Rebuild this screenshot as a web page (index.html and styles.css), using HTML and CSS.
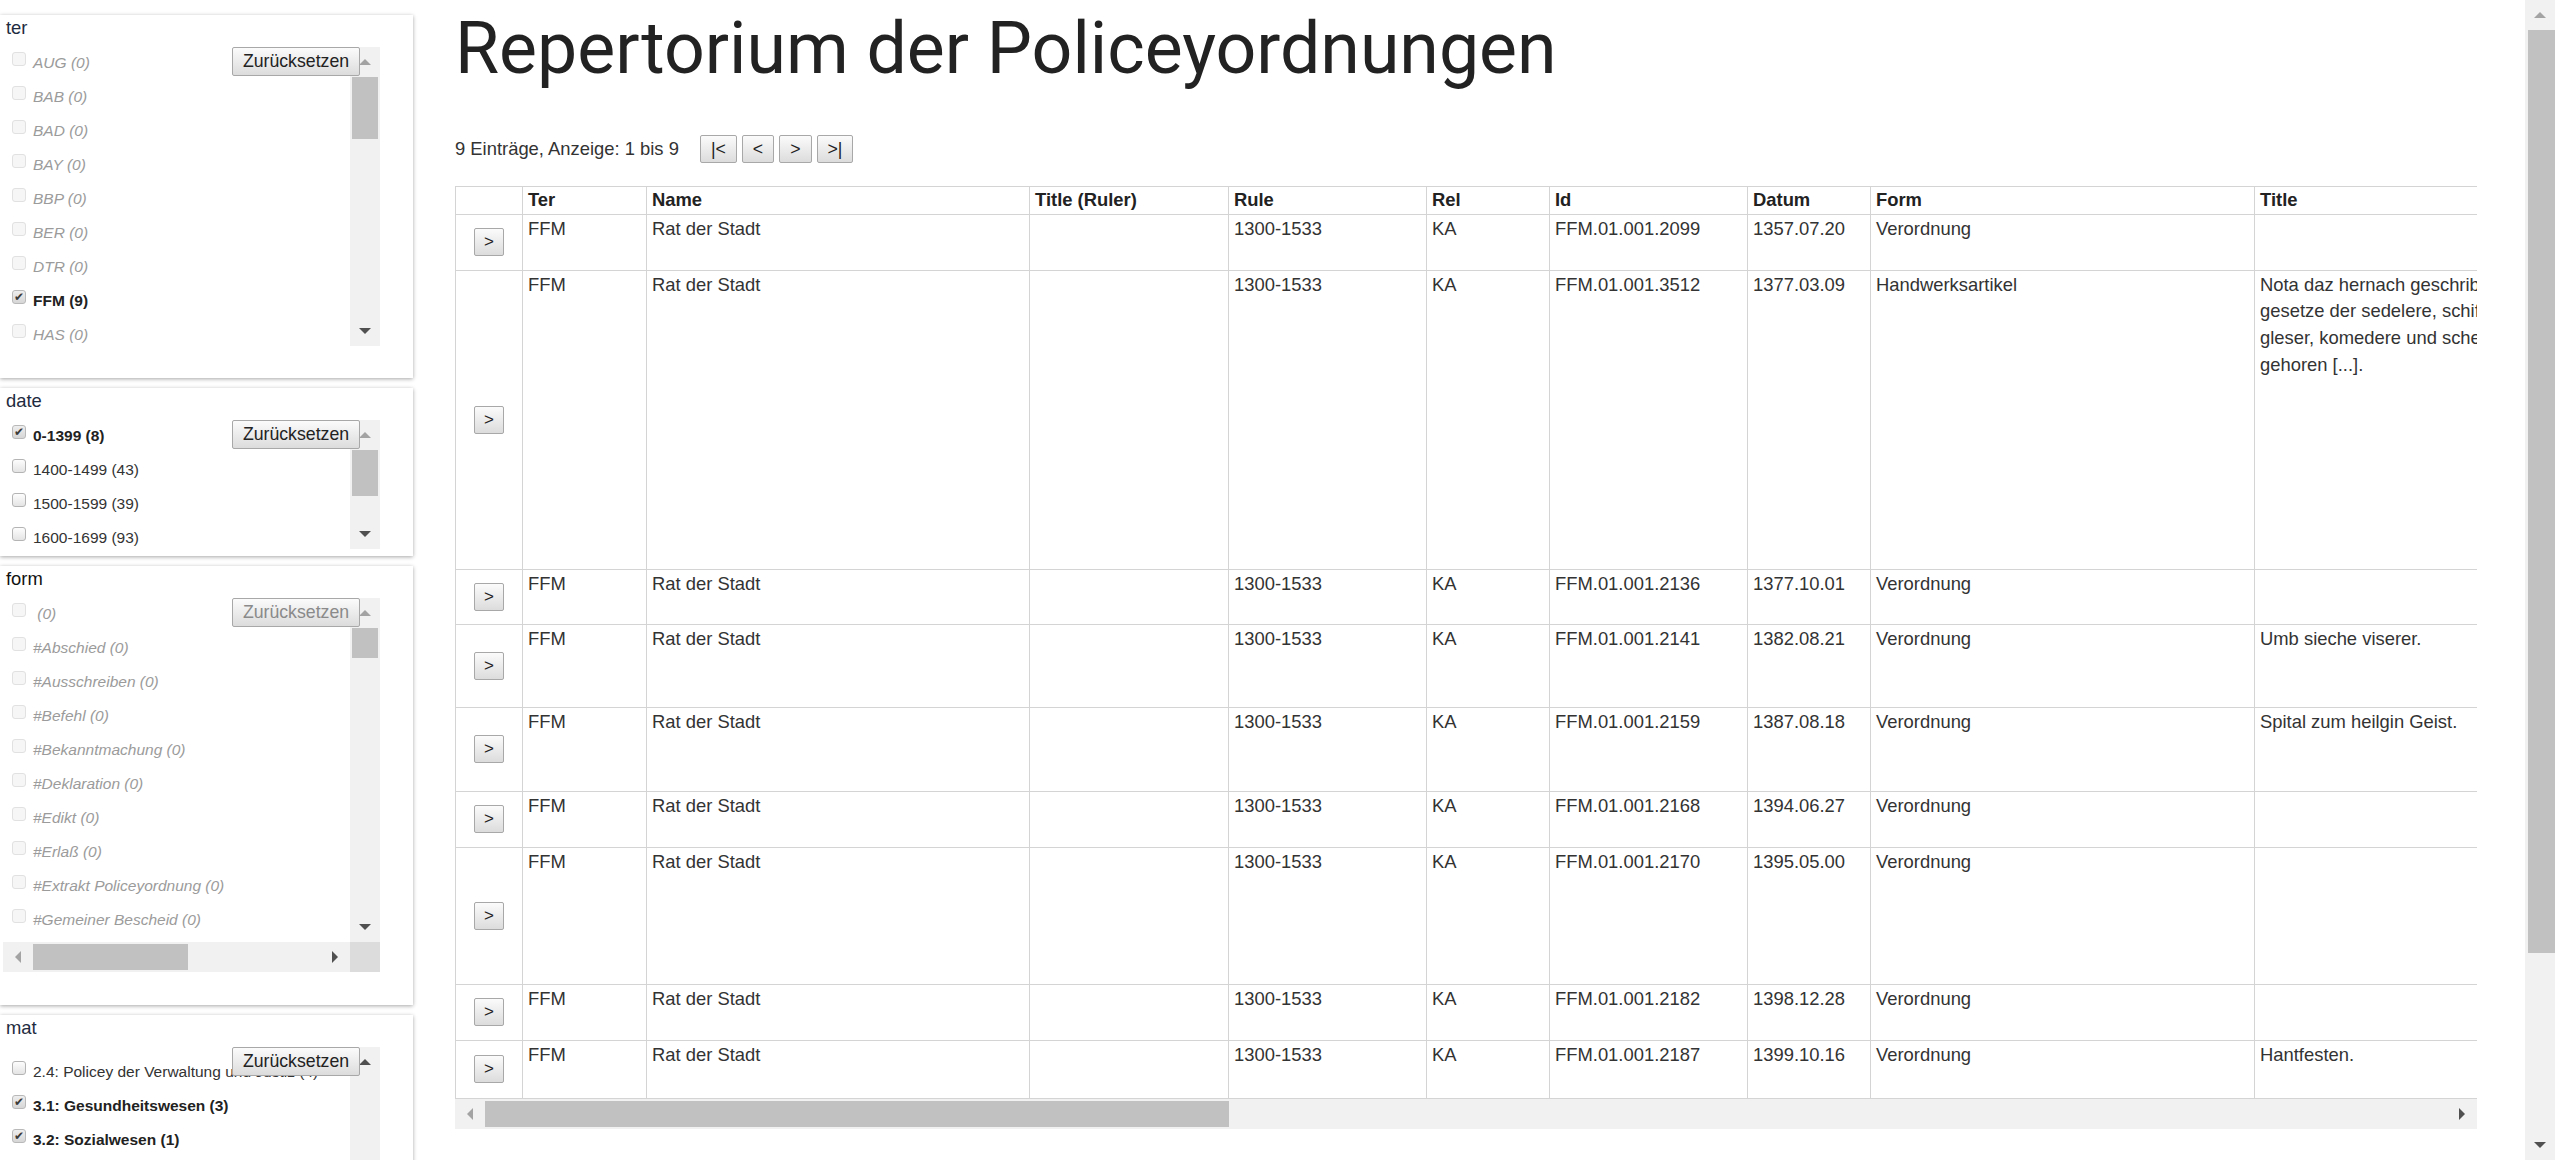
FILE: index.html
```html
<!DOCTYPE html>
<html lang="de">
<head>
<meta charset="utf-8">
<title>Repertorium der Policeyordnungen</title>
<link rel="stylesheet" href="styles.css">
</head>
<body>
<div class="page">
  <aside class="sidebar">
    <section class="panel p-ter">
      <div class="label">ter</div>
      <div class="listbox">
        <div class="lb-row h-ter">
          <div class="items">
            <div class="item dis"><span class="cb"></span><span class="txt">AUG (0)</span></div>
            <div class="item dis"><span class="cb"></span><span class="txt">BAB (0)</span></div>
            <div class="item dis"><span class="cb"></span><span class="txt">BAD (0)</span></div>
            <div class="item dis"><span class="cb"></span><span class="txt">BAY (0)</span></div>
            <div class="item dis"><span class="cb"></span><span class="txt">BBP (0)</span></div>
            <div class="item dis"><span class="cb"></span><span class="txt">BER (0)</span></div>
            <div class="item dis"><span class="cb"></span><span class="txt">DTR (0)</span></div>
            <div class="item sel"><span class="cb on">✔</span><span class="txt">FFM (9)</span></div>
            <div class="item dis"><span class="cb"></span><span class="txt">HAS (0)</span></div>
          </div>
          <div class="vscroll">
            <div class="arr up off"></div>
            <div class="vthumb t-ter"></div>
            <div class="vfill"></div>
            <div class="arr down"></div>
          </div>
        </div>
        <button class="reset">Zurücksetzen</button>
      </div>
    </section>

    <section class="panel p-date">
      <div class="label">date</div>
      <div class="listbox">
        <div class="lb-row h-date">
          <div class="items">
            <div class="item sel"><span class="cb en on">✔</span><span class="txt">0-1399 (8)</span></div>
            <div class="item"><span class="cb en"></span><span class="txt">1400-1499 (43)</span></div>
            <div class="item"><span class="cb en"></span><span class="txt">1500-1599 (39)</span></div>
            <div class="item"><span class="cb en"></span><span class="txt">1600-1699 (93)</span></div>
          </div>
          <div class="vscroll">
            <div class="arr up off"></div>
            <div class="vthumb t-date"></div>
            <div class="vfill"></div>
            <div class="arr down"></div>
          </div>
        </div>
        <button class="reset">Zurücksetzen</button>
      </div>
    </section>

    <section class="panel p-form">
      <div class="label dark">form</div>
      <div class="listbox">
        <div class="lb-row h-form">
          <div class="items">
            <div class="item dis"><span class="cb"></span><span class="txt">&nbsp;(0)</span></div>
            <div class="item dis"><span class="cb"></span><span class="txt">#Abschied (0)</span></div>
            <div class="item dis"><span class="cb"></span><span class="txt">#Ausschreiben (0)</span></div>
            <div class="item dis"><span class="cb"></span><span class="txt">#Befehl (0)</span></div>
            <div class="item dis"><span class="cb"></span><span class="txt">#Bekanntmachung (0)</span></div>
            <div class="item dis"><span class="cb"></span><span class="txt">#Deklaration (0)</span></div>
            <div class="item dis"><span class="cb"></span><span class="txt">#Edikt (0)</span></div>
            <div class="item dis"><span class="cb"></span><span class="txt">#Erlaß (0)</span></div>
            <div class="item dis"><span class="cb"></span><span class="txt">#Extrakt Policeyordnung (0)</span></div>
            <div class="item dis"><span class="cb"></span><span class="txt">#Gemeiner Bescheid (0)</span></div>
            <div class="item dis"><span class="cb"></span><span class="txt">#Generale (0)</span></div>
          </div>
          <div class="vscroll">
            <div class="arr up off"></div>
            <div class="vthumb t-form"></div>
            <div class="vfill"></div>
            <div class="arr down"></div>
          </div>
        </div>
        <div class="hrow">
          <div class="hbar">
            <div class="arr left off"></div>
            <div class="hthumb t-hform"></div>
            <div class="hfill"></div>
            <div class="arr right"></div>
          </div>
          <div class="corner"></div>
        </div>
        <button class="reset" disabled>Zurücksetzen</button>
      </div>
    </section>

    <section class="panel p-mat">
      <div class="label">mat</div>
      <div class="listbox">
        <div class="lb-row h-mat">
          <div class="items pad-mat">
            <div class="item"><span class="cb en"></span><span class="txt">2.4: Policey der Verwaltung und Justiz (4)</span></div>
            <div class="item sel"><span class="cb en on">✔</span><span class="txt">3.1: Gesundheitswesen (3)</span></div>
            <div class="item sel"><span class="cb en on">✔</span><span class="txt">3.2: Sozialwesen (1)</span></div>
            <div class="item"><span class="cb en"></span><span class="txt">3.3: Bildungswesen (2)</span></div>
          </div>
          <div class="vscroll">
            <div class="arr up"></div>
            <div class="vfill"></div>
          </div>
        </div>
        <button class="reset">Zurücksetzen</button>
      </div>
    </section>
  </aside>

  <main class="main">
    <h1 class="title">Repertorium der Policeyordnungen</h1>

    <div class="pager">
      <span class="count">9 Einträge, Anzeige: 1 bis 9</span>
      <button class="pbtn">|&lt;</button>
      <button class="pbtn">&lt;</button>
      <button class="pbtn">&gt;</button>
      <button class="pbtn">&gt;|</button>
    </div>

    <div class="table-wrap">
      <div class="table-clip">
        <table class="grid">
          <colgroup>
            <col class="c-act"><col class="c-ter"><col class="c-name"><col class="c-ruler"><col class="c-rule">
            <col class="c-rel"><col class="c-id"><col class="c-datum"><col class="c-form"><col class="c-title">
          </colgroup>
          <thead>
            <tr class="hr">
              <th></th><th>Ter</th><th>Name</th><th>Title (Ruler)</th><th>Rule</th>
              <th>Rel</th><th>Id</th><th>Datum</th><th>Form</th><th>Title</th>
            </tr>
          </thead>
          <tbody>
            <tr class="r56">
              <td class="act"><button class="rowbtn">&gt;</button></td>
              <td>FFM</td><td>Rat der Stadt</td><td></td><td>1300-1533</td>
              <td>KA</td><td>FFM.01.001.2099</td><td>1357.07.20</td><td>Verordnung</td><td></td>
            </tr>
            <tr class="r299">
              <td class="act"><button class="rowbtn">&gt;</button></td>
              <td>FFM</td><td>Rat der Stadt</td><td></td><td>1300-1533</td>
              <td>KA</td><td>FFM.01.001.3512</td><td>1377.03.09</td><td>Handwerksartikel</td>
              <td class="nw">Nota daz hernach geschriben stent die<br>gesetze der sedelere, schiffere und<br>gleser, komedere und schefere, die dar zu<br>gehoren [...].</td>
            </tr>
            <tr class="r55">
              <td class="act"><button class="rowbtn">&gt;</button></td>
              <td>FFM</td><td>Rat der Stadt</td><td></td><td>1300-1533</td>
              <td>KA</td><td>FFM.01.001.2136</td><td>1377.10.01</td><td>Verordnung</td><td></td>
            </tr>
            <tr class="r83">
              <td class="act"><button class="rowbtn">&gt;</button></td>
              <td>FFM</td><td>Rat der Stadt</td><td></td><td>1300-1533</td>
              <td>KA</td><td>FFM.01.001.2141</td><td>1382.08.21</td><td>Verordnung</td><td>Umb sieche viserer.</td>
            </tr>
            <tr class="r84">
              <td class="act"><button class="rowbtn">&gt;</button></td>
              <td>FFM</td><td>Rat der Stadt</td><td></td><td>1300-1533</td>
              <td>KA</td><td>FFM.01.001.2159</td><td>1387.08.18</td><td>Verordnung</td><td>Spital zum heilgin Geist.</td>
            </tr>
            <tr class="r56">
              <td class="act"><button class="rowbtn">&gt;</button></td>
              <td>FFM</td><td>Rat der Stadt</td><td></td><td>1300-1533</td>
              <td>KA</td><td>FFM.01.001.2168</td><td>1394.06.27</td><td>Verordnung</td><td></td>
            </tr>
            <tr class="r137">
              <td class="act"><button class="rowbtn">&gt;</button></td>
              <td>FFM</td><td>Rat der Stadt</td><td></td><td>1300-1533</td>
              <td>KA</td><td>FFM.01.001.2170</td><td>1395.05.00</td><td>Verordnung</td><td></td>
            </tr>
            <tr class="r56">
              <td class="act"><button class="rowbtn">&gt;</button></td>
              <td>FFM</td><td>Rat der Stadt</td><td></td><td>1300-1533</td>
              <td>KA</td><td>FFM.01.001.2182</td><td>1398.12.28</td><td>Verordnung</td><td></td>
            </tr>
            <tr class="r58">
              <td class="act"><button class="rowbtn">&gt;</button></td>
              <td>FFM</td><td>Rat der Stadt</td><td></td><td>1300-1533</td>
              <td>KA</td><td>FFM.01.001.2187</td><td>1399.10.16</td><td>Verordnung</td><td>Hantfesten.</td>
            </tr>
          </tbody>
        </table>
      </div>
      <div class="hbar tbar">
        <div class="arr left off"></div>
        <div class="hthumb t-htable"></div>
        <div class="hfill"></div>
        <div class="arr right"></div>
      </div>
    </div>
  </main>
</div>

<div class="page-scroll">
  <div class="arr up off"></div>
  <div class="vthumb t-page"></div>
  <div class="vfill"></div>
  <div class="arr down"></div>
</div>
</body>
</html>
```
FILE: styles.css
```css
html, body {
  margin: 0;
  height: 1160px;
  overflow: hidden;
}
body {
  font-family: "Liberation Sans", Arial, sans-serif;
  color: #333;
  background: #fff;
}
.page {
  display: flex;
  align-items: flex-start;
}

/* ---------- sidebar ---------- */
.sidebar {
  width: 413px;
  flex: none;
  padding-top: 15px;
  display: flex;
  flex-direction: column;
  gap: 10px;
}
.panel {
  background: #fff;
  box-shadow: 0 1px 4px rgba(0, 0, 0, 0.35);
  overflow: hidden;
}
.p-ter { height: 363px; }
.p-date { height: 168px; }
.p-form { height: 439px; }
.p-mat { height: 220px; }

.label {
  font-size: 18.4px;
  line-height: 26.7px;
  padding-left: 6px;
  color: #1e2b40;
}
.label.dark { color: #111; }

.listbox {
  position: relative;
  margin: 5px 0 0 3px;
  width: 377px;
  display: flex;
  flex-direction: column;
}
.lb-row { display: flex; }
.h-ter { height: 299px; }
.h-date { height: 129px; }
.h-form { height: 344px; }
.h-mat { height: 180px; }

.items {
  flex: 1;
  overflow: hidden;
  padding-top: 5.5px;
}
.items.pad-mat { padding-top: 14px; }
.item {
  height: 34px;
  display: flex;
  align-items: flex-start;
  padding-left: 9px;
  font-size: 15.5px;
  line-height: 20px;
  white-space: nowrap;
  color: #333;
}
.item .txt { margin-top: 1px; margin-left: 7px; }
.item.dis { color: #9b9b9b; font-style: italic; }
.item.sel { font-weight: bold; color: #222; }

.cb {
  box-sizing: border-box;
  width: 14px;
  height: 14px;
  flex: none;
  border: 1px solid #e1e1e1;
  border-radius: 3px;
  background: #f6f6f6;
  font-family: "DejaVu Sans", sans-serif;
  font-size: 12px;
  line-height: 12px;
  text-align: center;
  color: #3a3a3a;
  font-style: normal;
  font-weight: normal;
}
.cb.en {
  border-color: #b4b4b4;
  background: linear-gradient(#fdfdfd, #e4e4e4);
}
.cb.on {
  border-color: #b9b9b9;
  background: linear-gradient(#eeeeee, #d6d6d6);
}

.vscroll {
  width: 30px;
  flex: none;
  background: #f1f1f1;
  display: flex;
  flex-direction: column;
}
.vthumb {
  margin: 0 2px;
  background: #c1c1c1;
  flex: none;
}
.vfill { flex: 1; }
.t-ter { height: 62px; }
.t-date { height: 46px; }
.t-form { height: 30px; }

.hrow { display: flex; height: 30px; }
.hbar {
  flex: 1;
  background: #f1f1f1;
  display: flex;
}
.corner { width: 30px; background: #dcdcdc; }
.hthumb {
  margin: 2px 0 2px 0;
  background: #c1c1c1;
  flex: none;
}
.hfill { flex: 1; }
.t-hform { width: 155px; }

/* arrow buttons of scrollbars */
.arr {
  --c: #505050;
  width: 30px;
  height: 30px;
  flex: none;
  display: flex;
  align-items: center;
  justify-content: center;
}
.arr.off { --c: #a3a3a3; }
.arr::before {
  content: "";
  border-style: solid;
  width: 0;
  height: 0;
}
.arr.up::before { border-width: 0 6px 6px 6px; border-color: transparent transparent var(--c) transparent; }
.arr.down::before { border-width: 6px 6px 0 6px; border-color: var(--c) transparent transparent transparent; }
.arr.left::before { border-width: 6px 6px 6px 0; border-color: transparent var(--c) transparent transparent; }
.arr.right::before { border-width: 6px 0 6px 6px; border-color: transparent transparent transparent var(--c); }

/* buttons */
.reset, .pbtn, .rowbtn {
  font-family: "Liberation Sans", Arial, sans-serif;
  color: #222;
  border: 1px solid #a8a8a8;
  border-radius: 2px;
  background: linear-gradient(#fbfbfb, #dcdcdc);
  box-sizing: border-box;
  cursor: pointer;
}
.reset {
  position: absolute;
  top: 0;
  left: 229px;
  width: 128px;
  height: 29px;
  padding: 0;
  font-size: 17.7px;
}
.reset:disabled { color: #8a8a8a; }

/* ---------- main ---------- */
.main {
  margin-left: 42px;
  width: 2022px;
  padding-top: 8px;
}
.title {
  font-family: Roboto, "Liberation Sans", sans-serif;
  font-weight: 400;
  font-size: 71.6px;
  line-height: 82.5px;
  margin: 0;
  color: #222;
}
.pager {
  display: flex;
  align-items: center;
  height: 28px;
  margin-top: 44.5px;
  font-size: 18.4px;
  line-height: 26.7px;
}
.pager .count { margin-right: 21px; }
.pbtn {
  height: 28px;
  padding: 0 10px;
  margin-right: 5px;
  font-size: 17.7px;
}

.table-wrap {
  margin-top: 23px;
  width: 2022px;
}
.table-clip { overflow: hidden; }
.grid {
  border-collapse: collapse;
  table-layout: fixed;
  width: 5335px;
  font-size: 18.4px;
  line-height: 26.7px;
  color: #333;
}
.grid th, .grid td {
  border: 1px solid #d4d4d4;
  padding: 1px 5px 0 5px;
  text-align: left;
  vertical-align: top;
  overflow: hidden;
}
.grid th {
  font-weight: bold;
  color: #222;
  padding-top: 0;
}
.grid td.act {
  vertical-align: middle;
  text-align: center;
  padding: 0;
}
.grid td.nw { white-space: nowrap; }

.c-act { width: 67px; }
.c-ter { width: 124px; }
.c-name { width: 383px; }
.c-ruler { width: 199px; }
.c-rule { width: 198px; }
.c-rel { width: 123px; }
.c-id { width: 198px; }
.c-datum { width: 123px; }
.c-form { width: 384px; }
.c-title { width: 3536px; }

.hr { height: 27px; }
.r55 { height: 55px; }
.r56 { height: 56px; }
.r58 { height: 58px; }
.r83 { height: 83px; }
.r84 { height: 84px; }
.r137 { height: 137px; }
.r299 { height: 299px; }

.rowbtn {
  width: 30px;
  height: 28px;
  padding: 0;
  font-size: 17px;
}

.tbar { height: 30px; }
.t-htable { width: 744px; }

/* page scrollbar */
.page-scroll {
  position: fixed;
  top: 0;
  right: 0;
  width: 30px;
  height: 1160px;
  background: #f1f1f1;
  display: flex;
  flex-direction: column;
}
.page-scroll .vthumb { margin: 0 0 0 3px; }
.t-page { height: 923px; }
```
